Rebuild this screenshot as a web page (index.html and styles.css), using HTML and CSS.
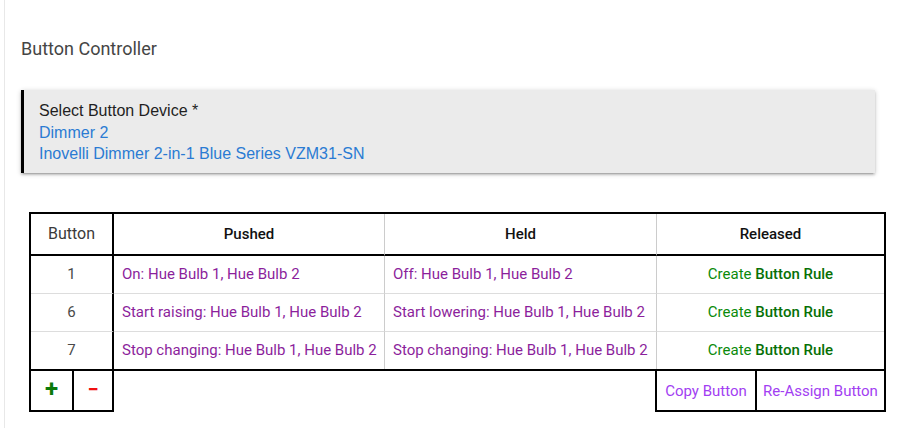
FILE: index.html
```html
<!DOCTYPE html>
<html>
<head>
<meta charset="utf-8">
<link rel="stylesheet" href="styles.css">
</head>
<body>
<div class="page">
  <div class="title">Button Controller</div>
  <div class="device">
    <div class="label">Select Button Device *</div>
    <div class="link">Dimmer 2</div>
    <div class="link">Inovelli Dimmer 2-in-1 Blue Series VZM31-SN</div>
  </div>
  <div class="rules">
    <div class="grid">
      <div class="cell hd c-btn">Button</div>
      <div class="cell hd c-push">Pushed</div>
      <div class="cell hd c-held">Held</div>
      <div class="cell hd c-rel">Released</div>

      <div class="cell c-btn">1</div>
      <div class="cell c-push act">On: Hue Bulb 1, Hue Bulb 2</div>
      <div class="cell c-held act">Off: Hue Bulb 1, Hue Bulb 2</div>
      <div class="cell c-rel">Create&nbsp;<b>Button Rule</b></div>

      <div class="cell c-btn">6</div>
      <div class="cell c-push act">Start raising: Hue Bulb 1, Hue Bulb 2</div>
      <div class="cell c-held act">Start lowering: Hue Bulb 1, Hue Bulb 2</div>
      <div class="cell c-rel">Create&nbsp;<b>Button Rule</b></div>

      <div class="cell last c-btn">7</div>
      <div class="cell last c-push act">Stop changing: Hue Bulb 1, Hue Bulb 2</div>
      <div class="cell last c-held act">Stop changing: Hue Bulb 1, Hue Bulb 2</div>
      <div class="cell last c-rel">Create&nbsp;<b>Button Rule</b></div>
    </div>
    <div class="footer">
      <div class="group">
        <div class="fcell add w1">+</div>
        <div class="fcell del w2">−</div>
      </div>
      <div class="group">
        <div class="fcell opt w3">Copy Button</div>
        <div class="fcell opt w4">Re-Assign Button</div>
      </div>
    </div>
  </div>
</div>
</body>
</html>
```
FILE: styles.css
```css
* { box-sizing: border-box; }
body {
  margin: 0;
  background: #fff;
  font-family: Roboto, "Liberation Sans", sans-serif;
}
.page {
  margin-left: 4px;
  border-left: 1px solid #e8e8e8;
  padding: 37px 0 0 16px;
  min-height: 428px;
}
.title {
  font-size: 18px;
  line-height: 24px;
  color: #454545;
}
.device {
  margin-top: 29px;
  width: 854px;
  background: #ebebeb;
  border-left: 3px solid #000;
  padding: 10px 0 8px 15px;
  font-family: "Liberation Sans", Arial, sans-serif;
  font-size: 16px;
  line-height: 21.6px;
  box-shadow: 0 2px 2px 0 rgba(0,0,0,.14), 0 3px 1px -2px rgba(0,0,0,.12), 0 1px 5px 0 rgba(0,0,0,.2);
}
.label { color: #1f1f1f; }
.link { color: #2a7bd3; }
.rules {
  margin-top: 39px;
  margin-left: 8px;
  width: 857px;
}
.grid {
  display: grid;
  grid-template-columns: 83px 271px 272px 1fr;
  border: 2px solid #000;
}
.cell {
  display: flex;
  align-items: center;
  height: 38px;
  padding: 0 8px;
  border-bottom: 1px solid #ddd;
  font-size: 15px;
  white-space: nowrap;
}
.cell.last { height: 37px; border-bottom: 0; }
.cell.hd {
  height: 42px;
  border-bottom: 2px solid #000;
  justify-content: center;
  font-weight: 500;
  color: #111;
}
.cell.hd.c-btn { font-weight: 400; font-size: 16px; color: #3a3a3a; }
.c-btn { border-right: 2px solid #000; justify-content: center; color: #4a4a4a; }
.c-push, .c-held { border-right: 1px solid #ccc; }
.act { color: #8c1f9c; }
.c-rel { justify-content: center; color: #0a8a0a; }
.c-rel b { font-weight: 500; color: #067006; }
.footer {
  display: flex;
  justify-content: space-between;
}
.group {
  display: flex;
  border: 2px solid #000;
  border-top: 0;
}
.fcell {
  height: 39px;
  display: flex;
  align-items: center;
  justify-content: center;
}
.w1 { width: 43px; border-right: 2px solid #000; }
.w2 { width: 38px; }
.w3 { width: 100px; border-right: 2px solid #000; }
.w4 { width: 127px; }
.add { color: #0a7a0a; font-size: 24px; font-weight: 700; padding-bottom: 2px; }
.del { color: #f01010; font-size: 20px; font-weight: 700; padding-bottom: 2px; }
.opt { color: #a23ef2; font-size: 15px; white-space: nowrap; padding-top: 2px; }
```
